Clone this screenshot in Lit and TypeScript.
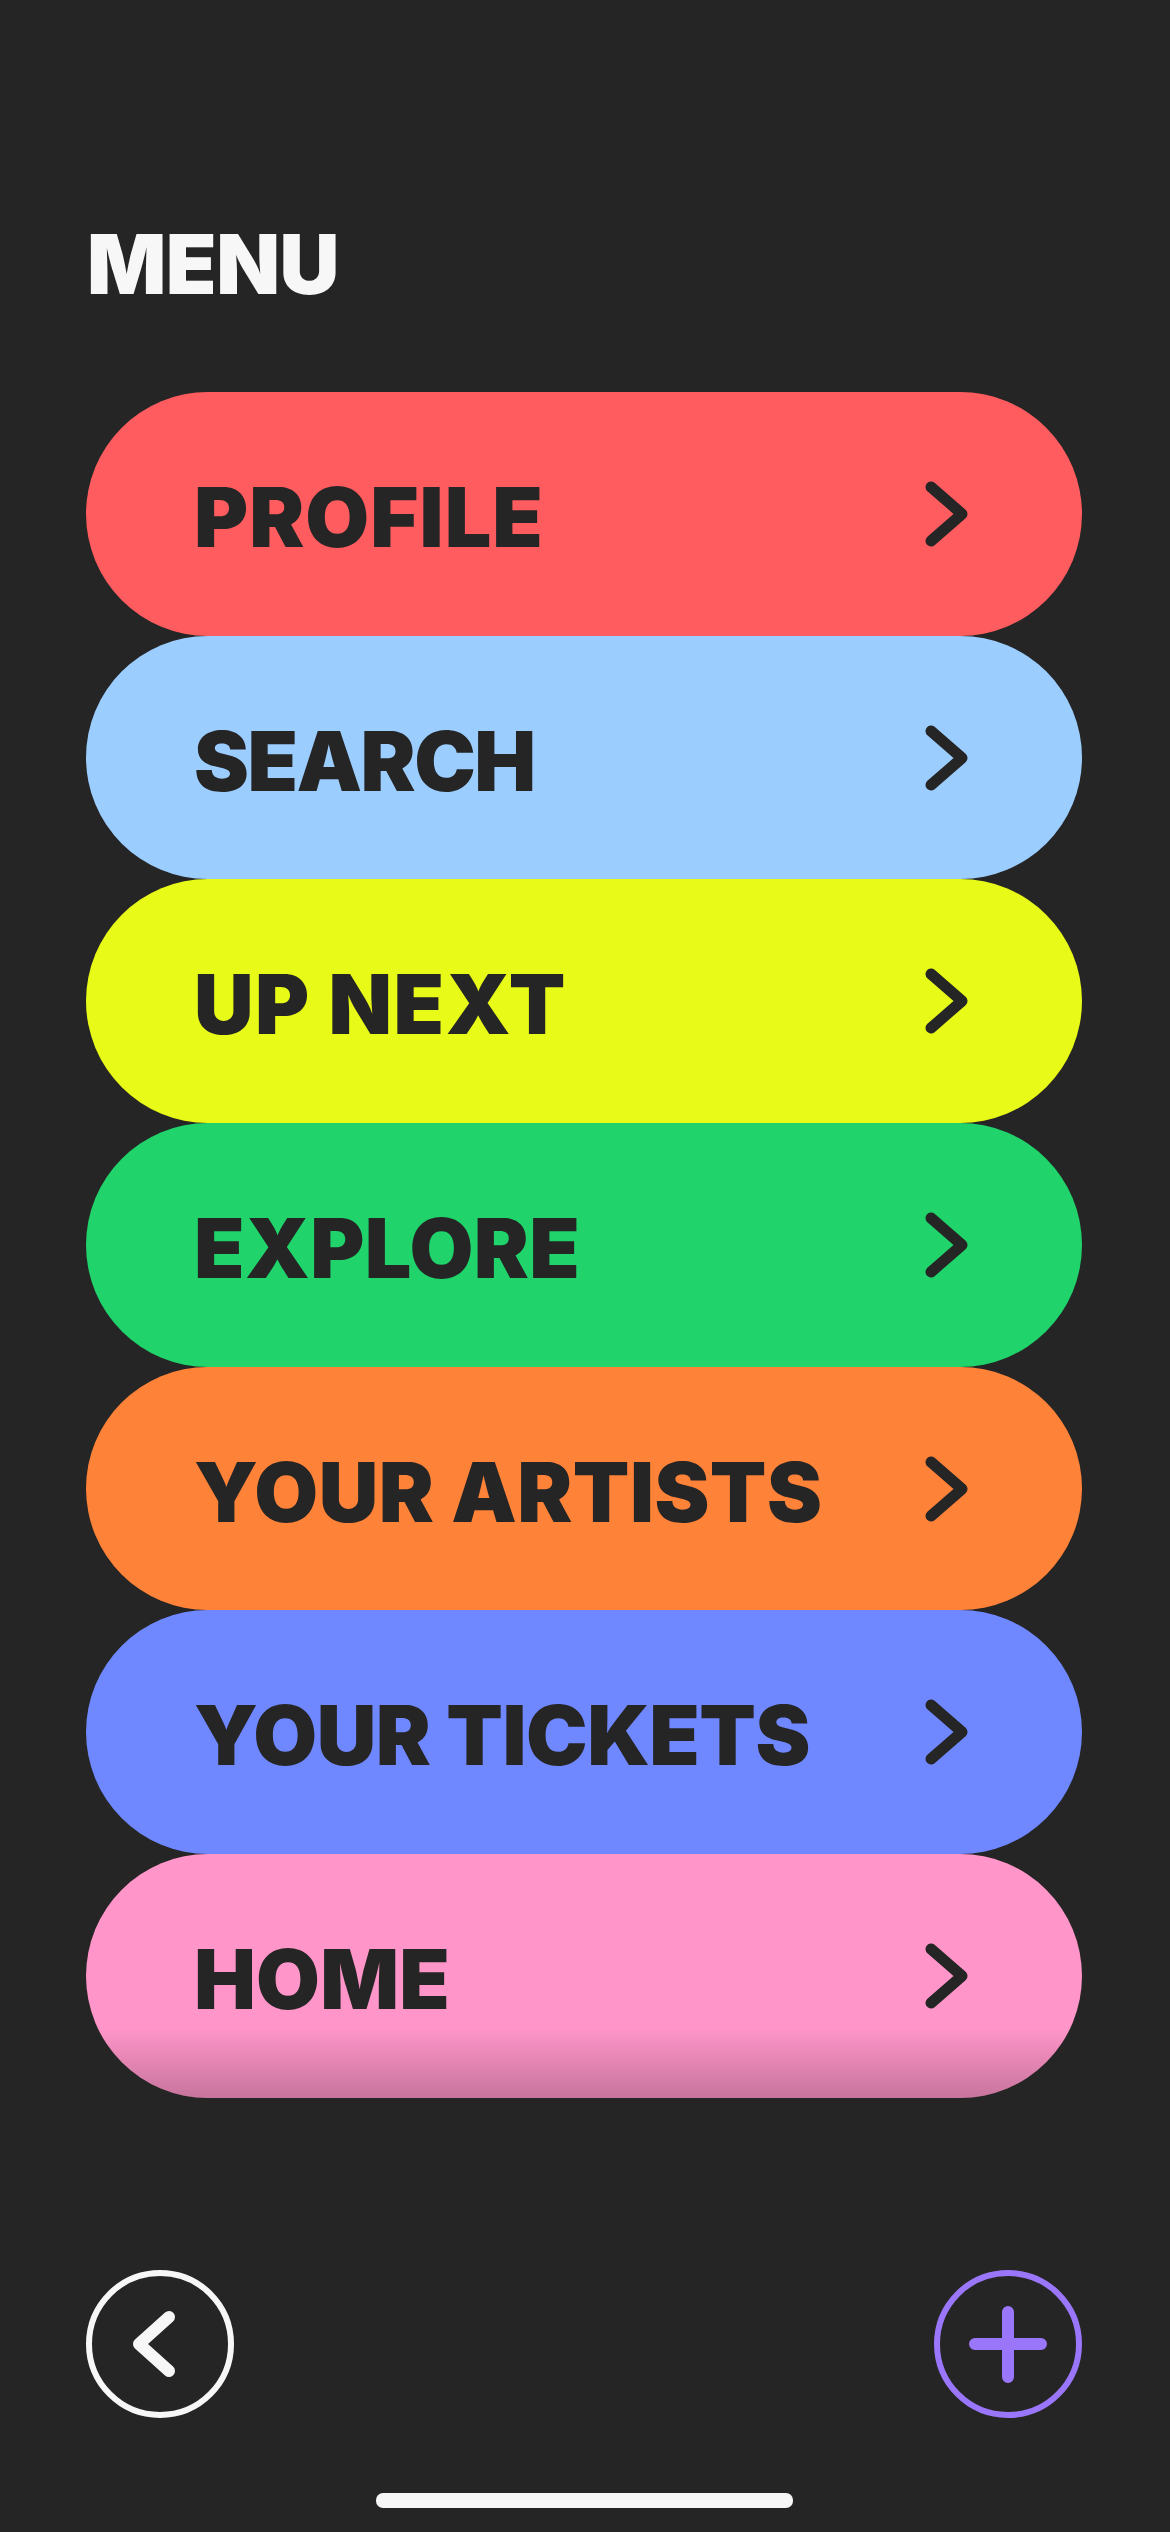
import { LitElement, html, css, svg } from "lit";
import { customElement } from "lit/decorators.js";

const rows: [string, string, number][] = [
  ["PROFILE", "#ff5c5f", 1.05],
  ["SEARCH", "#9ccdff", -1.5],
  ["UP NEXT", "#e8fa17", 1.5],
  ["EXPLORE", "#20d36b", 0.4],
  ["YOUR ARTISTS", "#ff8239", 0.47],
  ["YOUR TICKETS", "#7088ff", -0.5],
  ["HOME", "#ff95c9", 0.2],
];

@customElement("app-root")
export class AppRoot extends LitElement {
  static styles = css`
    :host {
      display: block;
      width: 1170px;
      height: 2532px;
      background: #252525;
      font-family: Inter, "Liberation Sans", sans-serif;
      overflow: hidden;
    }
    .page {
      display: flex;
      flex-direction: column;
      height: 100%;
      padding: 220px 88px 0 86px;
      box-sizing: border-box;
    }
    .title {
      margin: 0 0 84px 0;
      padding-left: 1px;
      height: 88px;
      line-height: 88px;
      font-size: 83px;
      font-weight: 900;
      letter-spacing: -0.5px;
      color: #f7f7f7;
    }
    .list {
      display: flex;
      flex-direction: column;
    }
    .row {
      position: relative;
      display: flex;
      align-items: center;
      justify-content: space-between;
      height: 243.7px;
      padding: 6px 114px 0 108px;
      box-sizing: border-box;
      border-radius: 122px;
      overflow: hidden;
      font-size: 82.5px;
      font-weight: 900;
      color: #252525;
    }
    .fade {
      position: absolute;
      left: 0;
      right: 0;
      bottom: 0;
      height: 70px;
      background: linear-gradient(rgba(0, 0, 0, 0), rgba(0, 0, 0, 0.22));
    }
    .chev {
      width: 44px;
      height: 66px;
      flex: none;
      margin-top: -6px;
    }
    .bottom {
      display: flex;
      justify-content: space-between;
      margin-top: 172px;
    }
    .circle {
      width: 148px;
      height: 148px;
      display: block;
    }
    .bar {
      align-self: center;
      margin: 75px 0 0 0;
      width: 417px;
      height: 15px;
      border-radius: 7px;
      background: #f7f7f7;
    }
  `;

  render() {
    return html`<div class="page">
      <div class="title">MENU</div>
      <div class="list">
        ${rows.map(
          ([label, color, tracking], i) => html`<div class="row" style="background:${color};letter-spacing:${tracking}px">
            <span>${label}</span>
            <svg class="chev" viewBox="0 0 44 66">
              <path d="M7 6 L38 33 L7 60" fill="none" stroke="#252525" stroke-width="11" stroke-linecap="round" stroke-linejoin="round" />
            </svg>
            ${i === rows.length - 1 ? html`<div class="fade"></div>` : ""}
          </div>`
        )}
      </div>
      <div class="bottom">
        <svg class="circle" viewBox="0 0 148 148" fill="none">
          <circle cx="74" cy="74" r="71" stroke="#f7f7f7" stroke-width="6" />
          ${svg`<path d="M83 47 L53 74 L83 101" stroke="#f7f7f7" stroke-width="12" stroke-linecap="round" stroke-linejoin="round" />`}
        </svg>
        <svg class="circle" viewBox="0 0 148 148" fill="none">
          <circle cx="74" cy="74" r="71" stroke="#9a76fa" stroke-width="6" />
          ${svg`<path d="M74 42 V107 M41 74 H107" stroke="#9a76fa" stroke-width="12" stroke-linecap="round" />`}
        </svg>
      </div>
      <div class="bar"></div>
    </div>`;
  }
}
